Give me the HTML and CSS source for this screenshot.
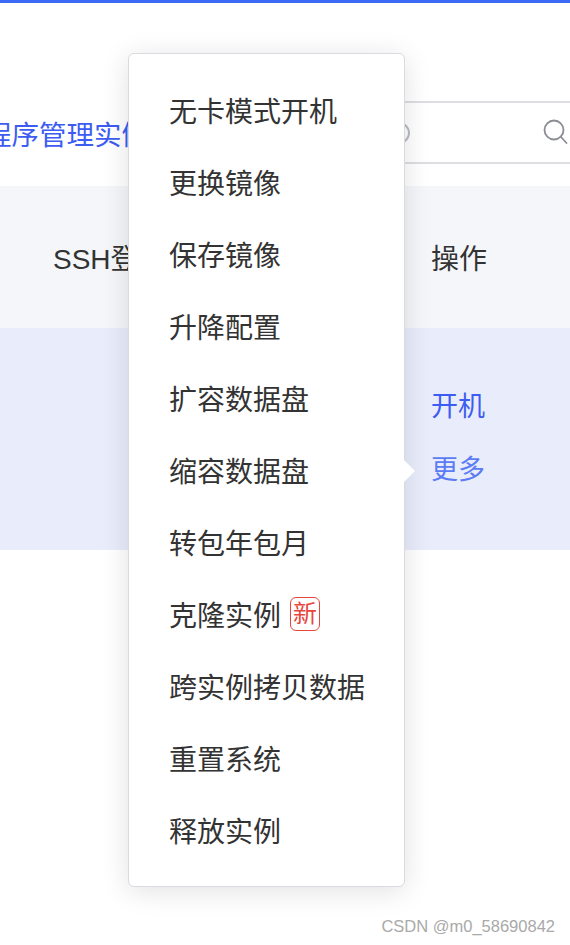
FILE: index.html
```html
<!DOCTYPE html>
<html lang="zh-CN">
<head>
  <meta charset="UTF-8" />
  <meta name="viewport" content="width=device-width, initial-scale=1.0"/>
  <title>实例列表</title>
  <link rel="stylesheet" href="styles.css">
</head>
<body>
  <div class="top-bar"></div>

  <div class="toolbar">
    <a class="link-title">程序管理实例</a>
    <div class="search-box">
      <span class="clear-icon"></span>
      <svg class="search-icon" width="26" height="28" viewBox="0 0 26 28">
        <circle cx="11" cy="11" r="9.5" fill="none" stroke="#8a8d93" stroke-width="1.8"/>
        <line x1="18" y1="18" x2="23.5" y2="24" stroke="#8a8d93" stroke-width="1.8" stroke-linecap="round"/>
      </svg>
    </div>
  </div>

  <div class="table">
    <div class="table-head">
      <div class="cell cell-first">SSH登录</div>
      <div class="cell cell-ops">操作</div>
    </div>
    <div class="table-row">
      <div class="cell cell-first"></div>
      <div class="cell cell-ops">
        <a class="op-link">开机</a>
        <a class="op-link op-more">更多</a>
      </div>
    </div>
  </div>

  <!-- menu déroulant "更多" -->
  <ul class="dropdown">
    <li>无卡模式开机</li>
    <li>更换镜像</li>
    <li>保存镜像</li>
    <li>升降配置</li>
    <li>扩容数据盘</li>
    <li>缩容数据盘</li>
    <li>转包年包月</li>
    <li>克隆实例 <span class="badge-new">新</span></li>
    <li>跨实例拷贝数据</li>
    <li>重置系统</li>
    <li>释放实例</li>
  </ul>

  <div class="watermark">CSDN @m0_58690842</div>
</body>
</html>
```

FILE: styles.css
```css
body {
  margin: 0;
  padding: 0;
  font-family: "Liberation Sans", "Noto Sans CJK SC", sans-serif;
  background-color: #fff;
  color: #333;
  width: 570px;
  height: 945px;
  overflow: hidden;
  position: relative;
}

.top-bar {
  height: 3px;
  background-color: #3d6af5;
}

.toolbar {
  display: flex;
  align-items: center;
  height: 63px;
  padding: 98px 0 22px;
}

.link-title {
  width: 356px;
  flex-shrink: 0;
  font-size: 27.5px;
  color: #3d5cf2;
  margin-left: -16px;
  white-space: nowrap;
}

.search-box {
  position: relative;
  width: 300px;
  height: 59px;
  border: 2px solid #dcdee2;
  border-radius: 4px;
  flex-shrink: 0;
}

.clear-icon {
  position: absolute;
  left: 46px;
  top: 19px;
  width: 18px;
  height: 18px;
  border: 2px solid #b9bcc2;
  border-radius: 50%;
}

.search-icon {
  position: absolute;
  left: 201px;
  top: 16px;
}

.table-head {
  display: flex;
  height: 142px;
  align-items: center;
  background-color: #f5f6fa;
  font-size: 28px;
}

.table-row {
  display: flex;
  height: 222px;
  align-items: center;
  background-color: #e9edfb;
}

.cell-first {
  width: 378px;
  padding-left: 53px;
}

.cell-ops {
  display: flex;
  flex-direction: column;
}

.op-link {
  font-size: 27px;
  line-height: 63px;
  color: #3d5cf2;
}

.op-more {
  color: #5b7cf5;
}

.dropdown {
  position: absolute;
  left: 128px;
  top: 53px;
  width: 275px;
  margin: 0;
  padding: 20px 0;
  list-style: none;
  background-color: #fff;
  border: 1px solid #d9dbe1;
  border-radius: 6px;
  box-shadow: 0 4px 28px rgba(0, 0, 0, 0.12);
}

.dropdown::after {
  content: "";
  position: absolute;
  left: 100%;
  top: 406px;
  border-top: 11px solid transparent;
  border-bottom: 11px solid transparent;
  border-left: 11px solid #fff;
}

.dropdown li {
  height: 72px;
  padding-left: 40px;
  font-size: 28px;
  color: #333;
  display: flex;
  align-items: center;
}

.badge-new {
  display: inline-flex;
  align-items: center;
  justify-content: center;
  width: 28px;
  height: 32px;
  margin-left: 9px;
  border: 1.5px solid #e8453c;
  border-radius: 6px;
  color: #e8453c;
  font-size: 24px;
  line-height: 1;
}

.watermark {
  position: absolute;
  right: 15px;
  top: 917px;
  font-family: "Liberation Sans", Arial, sans-serif;
  font-size: 16.5px;
  color: #a9a9a9;
}
```
